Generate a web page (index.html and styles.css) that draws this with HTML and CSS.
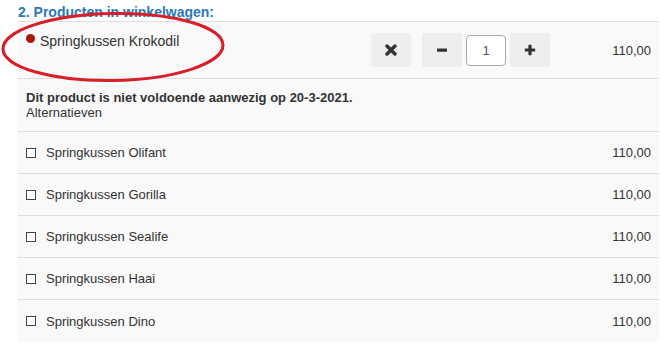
FILE: index.html
```html
<!DOCTYPE html>
<html lang="nl">
<head>
<meta charset="utf-8">
<link rel="stylesheet" href="styles.css">
</head>
<body>
<div class="page">
  <h2 class="title">2. Producten in winkelwagen:</h2>
  <div class="panel">
    <div class="row main">
      <div class="name"><span class="dot"></span>Springkussen Krokodil</div>
      <div class="controls">
        <button class="btn remove" type="button" aria-label="Verwijderen">
          <svg width="12" height="12" viewBox="0 0 12 12"><path d="M2 2 L10 10 M10 2 L2 10" stroke="#333" stroke-width="3.4" stroke-linecap="round"/></svg>
        </button>
        <button class="btn minus" type="button" aria-label="Minder">
          <svg width="12" height="12" viewBox="0 0 12 12"><rect x="1" y="4.5" width="10" height="3.2" rx="0.6" fill="#333"/></svg>
        </button>
        <input class="qty" type="text" value="1">
        <button class="btn plus" type="button" aria-label="Meer">
          <svg width="12" height="12" viewBox="0 0 12 12"><rect x="0.8" y="4.4" width="10.4" height="3.2" rx="0.6" fill="#333"/><rect x="4.4" y="0.8" width="3.2" height="10.4" rx="0.6" fill="#333"/></svg>
        </button>
      </div>
      <div class="price">110,00</div>
    </div>
    <div class="note">
      <strong>Dit product is niet voldoende aanwezig op 20-3-2021.</strong>
      <span>Alternatieven</span>
    </div>
    <div class="row alt"><label class="name"><span class="box"></span>Springkussen Olifant</label><div class="price">110,00</div></div>
    <div class="row alt"><label class="name"><span class="box"></span>Springkussen Gorilla</label><div class="price">110,00</div></div>
    <div class="row alt"><label class="name"><span class="box"></span>Springkussen Sealife</label><div class="price">110,00</div></div>
    <div class="row alt"><label class="name"><span class="box"></span>Springkussen Haai</label><div class="price">110,00</div></div>
    <div class="row alt"><label class="name"><span class="box"></span>Springkussen Dino</label><div class="price">110,00</div></div>
  </div>
  <svg class="ellipse" width="240" height="90" viewBox="0 0 240 90">
    <ellipse cx="113" cy="47" rx="110" ry="33.5" transform="rotate(-1 113 47)" fill="none" stroke="#d61f28" stroke-width="3"/>
  </svg>
</div>
</body>
</html>
```
FILE: styles.css
```css
* { box-sizing: border-box; }
html, body { margin: 0; padding: 0; background: #fff; }
body {
  font-family: "Liberation Sans", Arial, sans-serif;
  font-size: 13px;
  line-height: 15px;
  color: #333;
}
.page { position: relative; width: 662px; height: 343px; overflow: hidden; }
.title {
  margin: 0 0 1px 18px;
  padding-top: 4px;
  font-size: 14px;
  line-height: 16px;
  font-weight: bold;
  color: #2a78b6;
}
.panel {
  margin-left: 18px;
  width: 641px;
  background: #f9f9f9;
  border-top: 1px solid #dedede;
}
.row {
  display: grid;
  grid-template-columns: 1fr auto 101px;
  align-items: center;
  padding: 0 8px;
  border-bottom: 1px solid #dedede;
}
.row.main { height: 57px; }
.row.main .name {
  align-self: start;
  padding-top: 11px;
  display: flex;
  align-items: flex-start;
  font-size: 14px;
  line-height: 16px;
}
.dot {
  width: 9px; height: 9px; border-radius: 50%;
  background: #a8170f;
  margin: 1px 5px 0 0;
}
.controls { display: flex; align-items: center; }
.btn {
  width: 40px; height: 34px;
  border: 0; border-radius: 3px;
  background: #eeeeee;
  display: flex; align-items: center; justify-content: center;
  padding: 0;
}
.remove { margin-right: 11px; }
.qty {
  width: 40px; height: 31px;
  margin: 0 4px;
  border: 1px solid #a9a9a9;
  border-radius: 4px;
  background: #fff;
  text-align: center;
  font-family: "Liberation Sans", Arial, sans-serif;
  font-size: 13px;
  color: #555;
  padding: 0;
}
.price { grid-column: 3; text-align: right; }
.note {
  display: flex; flex-direction: column;
  padding: 11px 8px;
  border-bottom: 1px solid #dedede;
}
.note strong { font-weight: bold; }
.row.alt { height: 42px; grid-template-columns: 1fr 101px; }
.row.alt:last-child { border-bottom: 0; }
.row.alt .price { grid-column: 2; }
.alt .name { display: flex; align-items: center; }
.box {
  width: 10px; height: 10px;
  border: 1px solid #444;
  margin-right: 10px;
  background: #fff;
}
.ellipse { position: absolute; left: 0; top: 0; pointer-events: none; }
```
